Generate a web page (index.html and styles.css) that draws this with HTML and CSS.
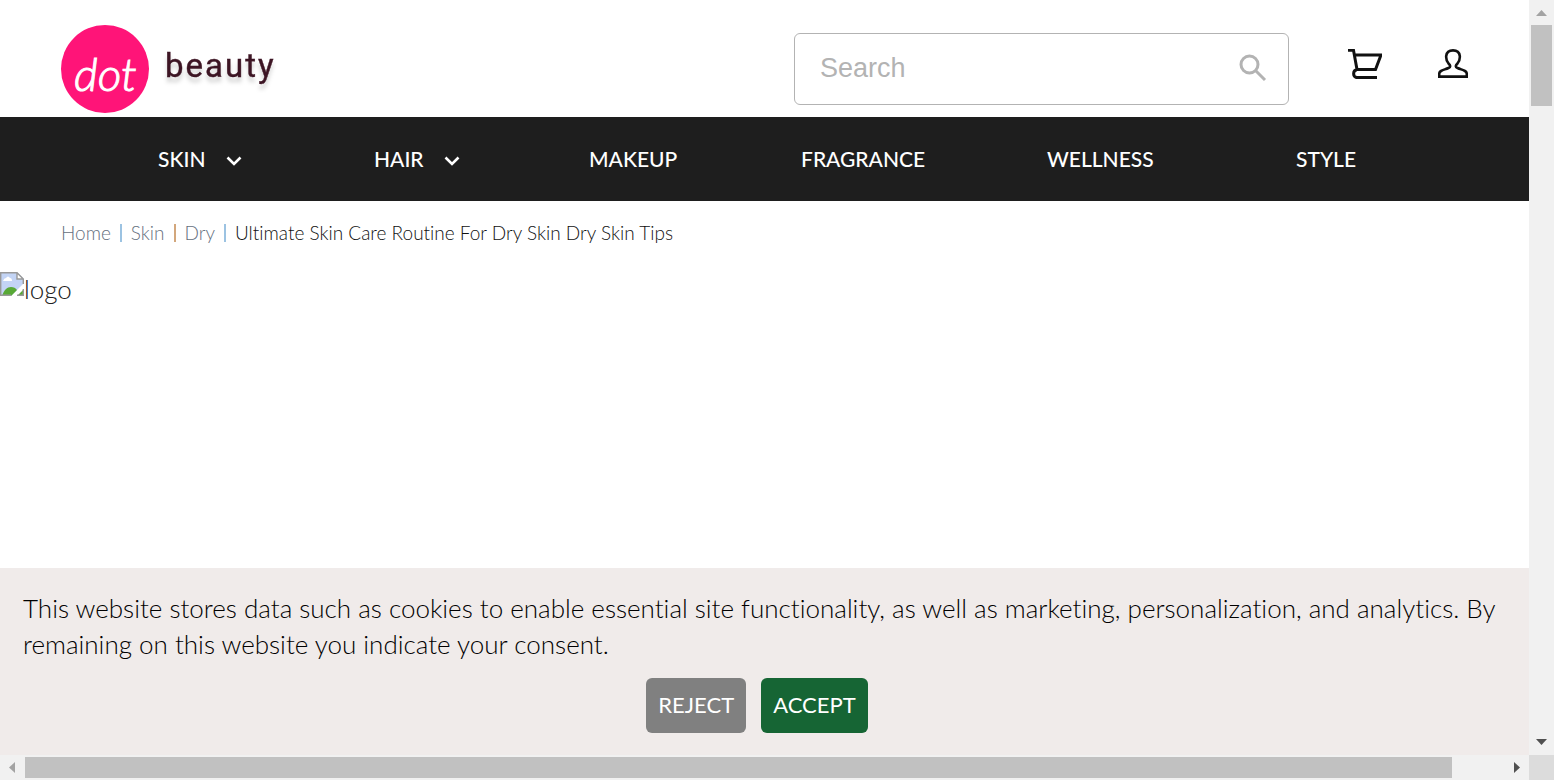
FILE: index.html
```
<!DOCTYPE html>
<html lang="en">
<head>
<meta charset="utf-8">
<meta name="viewport" content="width=device-width, initial-scale=1">
<title>Ultimate Skin Care Routine For Dry Skin</title>
<link rel="stylesheet" href="styles.css">
</head>
<body>
<div class="window">
  <div class="page">
    <header class="header">
      <a class="brand" href="#" aria-label="dot beauty">
        <svg class="brand-logo" viewBox="0 0 220 88" role="img">
          <circle cx="44" cy="44" r="44" fill="#ff1478"/>
          <text class="logo-dot" x="13" y="66">dot</text>
          <text class="logo-beauty" x="104" y="52">beauty</text>
        </svg>
      </a>
      <form class="search" role="search">
        <input class="search-input" type="search" placeholder="Search" aria-label="Search">
        <button class="icon-button" type="button" aria-label="Submit search">
          <svg class="search-icon" viewBox="0 0 28 28"><circle cx="10.500" cy="10.500" r="8.500"/><path d="M17 17l9 9"/></svg>
        </button>
      </form>
      <div class="actions">
        <a class="action" href="#" aria-label="Cart">
          <svg class="cart-icon" viewBox="0 0 34 30"><path d="M0 1.300H5.500L9 20.500H27.500L33 6H7M9 20.800C4.500 21 4.500 28.600 9 28.600H29"/></svg>
        </a>
        <a class="action" href="#" aria-label="Account">
          <svg class="user-icon" viewBox="0 0 30 30"><path d="M1.200 27.600V25C1.200 21.500 5 21.300 10.500 19C13 18 12.500 16.500 10.500 14.500C8.300 12 8 9.500 8.200 7C8.700 3 11.500 1.400 15 1.400S21.300 3 21.800 7C22 9.500 21.700 12 19.500 14.500C17.500 16.500 17 18 19.500 19C25 21.300 28.800 21.500 28.800 25V27.600Z"/></svg>
        </a>
      </div>
    </header>
    <nav class="nav" aria-label="Categories">
      <a class="nav-link" href="#">SKIN <svg class="chevron" viewBox="0 0 16 10"><path d="M1.500 1.500L8 8L14.500 1.500"/></svg></a>
      <a class="nav-link" href="#">HAIR <svg class="chevron" viewBox="0 0 16 10"><path d="M1.500 1.500L8 8L14.500 1.500"/></svg></a>
      <a class="nav-link" href="#">MAKEUP</a>
      <a class="nav-link" href="#">FRAGRANCE</a>
      <a class="nav-link" href="#">WELLNESS</a>
      <a class="nav-link" href="#">STYLE</a>
    </nav>
    <main class="content">
      <nav class="crumbs" aria-label="Breadcrumb">
        <a class="crumb" href="#">Home</a><span class="bar bar-blue"></span>
        <a class="crumb" href="#">Skin</a><span class="bar bar-tan"></span>
        <a class="crumb" href="#">Dry</a><span class="bar bar-blue"></span>
        <span class="crumb-current">Ultimate Skin Care Routine For Dry Skin Dry Skin Tips</span>
      </nav>
      <div class="missing">
        <svg class="missing-icon" viewBox="0 0 24 24">
          <path d="M0 0H17L24 7V11L11 24H0Z" fill="#c3d4f5"/>
          <path d="M2 24C4 18 7 15 11 15Q15 15 17 18L11 24ZM17 24L24 17V24Z" fill="#58a936"/>
          <path d="M3 9Q4 6 6 6Q8 3 10 6Q12 6 12 9Z" fill="#fff"/>
          <path d="M17 1V7H23Z" fill="#fff"/>
          <path d="M.700 24V.700H17L23.300 7V12M17 1V7H23M0 23.300H11M17 23.300H23.300V17" fill="none" stroke="#999" stroke-width="1.400"/>
        </svg>
        <span class="missing-label">logo</span>
      </div>
    </main>
    <section class="consent" aria-label="Cookie consent">
      <p class="consent-text">This website stores data such as cookies to enable essential site functionality, as well as marketing, personalization, and analytics. By remaining on this website you indicate your consent.</p>
      <div class="consent-buttons">
        <button class="button reject" type="button">REJECT</button>
        <button class="button accept" type="button">ACCEPT</button>
      </div>
    </section>
  </div>
  <div class="track track-y" aria-hidden="true">
    <svg class="arrow" viewBox="0 0 25 25"><path d="M7 16L12.500 10L18 16Z" fill="#a3a3a3"/></svg>
    <div class="thumb thumb-y"></div>
    <svg class="arrow arrow-end" viewBox="0 0 25 25"><path d="M7 9L12.500 15L18 9Z" fill="#505050"/></svg>
  </div>
  <div class="track track-x" aria-hidden="true">
    <svg class="arrow" viewBox="0 0 25 25"><path d="M15 7L9 12.500L15 18Z" fill="#a3a3a3"/></svg>
    <div class="rail"><div class="thumb thumb-x"></div></div>
    <svg class="arrow" viewBox="0 0 25 25"><path d="M10 7L16 12.500L10 18Z" fill="#505050"/></svg>
  </div>
  <div class="corner"></div>
</div>
</body>
</html>
```
FILE: styles.css
```
* { box-sizing: border-box; }
body { margin: 0; font-family: Lato, "Open Sans", sans-serif; font-variant-ligatures: none; color: #212121; background: #fff; }
a { text-decoration: none; color: inherit; }
svg { display: block; flex: none; }

.window { display: grid; grid-template-columns: minmax(0, 1fr) 25px; grid-template-rows: minmax(0, 1fr) 25px; height: 100vh; }
.page { display: flex; flex-direction: column; overflow: hidden; }

.header { display: flex; align-items: flex-start; padding: 25px 61px 4px; }
.brand { margin-right: auto; }
.brand-logo { width: 220px; height: 88px; }
.logo-dot { font: italic 300 46px Lato, sans-serif; fill: #fff; stroke: #fff; stroke-width: 1px; }
.logo-beauty { font: 400 33px Roboto, sans-serif; letter-spacing: 2px; fill: #3d1524; stroke: #3d1524; stroke-width: 0.4px; filter: drop-shadow(0 5px 2px rgb(0 0 0 / 18%)); }

.search { display: flex; align-items: center; width: 495px; height: 72px; margin-top: 8px; padding: 0 21px 2px 25px; border: 1px solid #b3b3b3; border-radius: 6px; }
.search-input { flex: 1; min-width: 0; padding: 0; border: 0; outline: 0; background: none; font: 27px "Liberation Sans", Arial, sans-serif; color: #333; }
.search-input::placeholder { color: #b3b3b3; }
.icon-button { padding: 0; border: 0; background: none; }
.search-icon { width: 28px; height: 28px; fill: none; stroke: #b3b3b3; stroke-width: 3; }

.actions { display: flex; align-items: center; gap: 56px; margin: 24px 0 0 59px; }
.cart-icon { width: 34px; height: 30px; fill: none; stroke: #111; stroke-width: 3; }
.user-icon { width: 30px; height: 30px; fill: none; stroke: #111; stroke-width: 2.6; }

.nav { display: grid; grid-template-columns: 216fr 215fr 212fr 246fr 249fr 233fr; align-items: center; height: 84px; padding: 0 0 2px 158px; background: #1e1e1e; color: #fff; font-size: 21px; font-weight: 500; }
.nav-link { display: flex; align-items: center; gap: 20px; }
.chevron { width: 16px; height: 10px; margin-top: 6px; fill: none; stroke: #fff; stroke-width: 2.6; }

.content { flex: 1; min-height: 0; }
.crumbs { display: flex; align-items: center; gap: 9px; padding: 20px 61px 0; font-size: 19px; line-height: 24px; font-weight: 300; }
.crumb { color: #667080; }
.crumb-current { color: #111; }
.bar { width: 2px; height: 18px; }
.bar-blue { background: #9cc3e2; }
.bar-tan { background: #d3a77c; }
.missing { display: flex; align-items: flex-start; margin-top: 27px; font-size: 26px; line-height: 34px; font-weight: 300; }
.missing-icon { width: 24px; height: 24px; }

.consent { padding: 22px 23px; background: #f0ebea; color: #000; }
.consent-text { margin: 0; font-size: 26px; line-height: 36px; font-weight: 300; }
.consent-buttons { display: flex; justify-content: center; gap: 15px; margin: 16px 15px 0 0; }
.button { height: 55px; padding: 0 12px 2px; border: 0; border-radius: 6px; color: #fff; font: 22px Lato, sans-serif; }
.reject { background: #808080; }
.accept { background: #166534; }

.track { display: flex; background: #f1f1f1; }
.track-y { flex-direction: column; }
.arrow { width: 25px; height: 25px; }
.arrow-end { margin-top: auto; }
.thumb { background: #c1c1c1; }
.thumb-y { height: 81px; margin: 0 2px; }
.rail { flex: 1; padding: 2px 0; }
.thumb-x { width: 96.5%; height: 21px; }
.corner { background: #dcdcdc; }
```
